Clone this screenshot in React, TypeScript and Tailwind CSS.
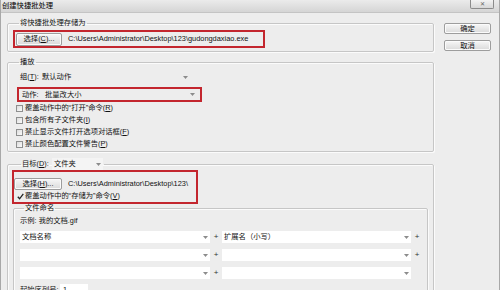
import React from 'react';

const K = ({ c }: { c: string }) => <span className="underline">{c}</span>;

const Arrow = () => (
  <svg width="5" height="3" viewBox="0 0 5 3" className="shrink-0">
    <path d="M0 0h5L2.5 3z" fill="#8c8c8c" />
  </svg>
);

const Btn = ({ children, className = '' }: { children: React.ReactNode; className?: string }) => (
  <div
    className={`flex items-center justify-center border border-[#9d9d9d] rounded-[2px] bg-gradient-to-b from-[#f7f7f7] to-[#dadada] shadow-[inset_0_0_0_1px_#fbfbfb] ${className}`}
  >
    {children}
  </div>
);

const Check = ({ checked = false }: { checked?: boolean }) =>
  checked ? (
    <svg width="7" height="7" viewBox="0 0 7 7" className="shrink-0">
      <path d="M0.8 3.8 L2.6 5.8 L6.3 0.9" stroke="#222" strokeWidth="1.3" fill="none" />
    </svg>
  ) : (
    <div className="w-[7px] h-[7px] shrink-0 border border-[#8e8f8f] bg-gradient-to-br from-[#dcdcdc] to-[#fbfbfb]" />
  );

const Dropdown = ({ text, className = '' }: { text?: string; className?: string }) => (
  <div className={`h-[12px] flex items-center justify-between pl-[2px] pr-[2px] ${className}`}>
    <span>{text}</span>
    <Arrow />
  </div>
);

const group = 'border border-[#c6c6c6] rounded-[2px] shadow-[inset_1px_1px_0_#fbfbfb,1px_1px_0_#fbfbfb]';

export default function App() {
  const options = [
    <>覆盖动作中的“打开”命令(<K c="R" />)</>,
    <>包含所有子文件夹(<K c="I" />)</>,
    <>禁止显示文件打开选项对话框(<K c="F" />)</>,
    <>禁止颜色配置文件警告(<K c="P" />)</>,
  ];

  return (
    <div
      className="w-[500px] h-[290px] overflow-hidden bg-[#ededed] border-x border-[#a8a8a8] text-[7.3px] leading-[10px] text-[#111]"
      style={{ fontFamily: '"Liberation Sans", "Noto Sans CJK SC", sans-serif' }}
    >
      {/* title bar */}
      <div className="h-[13px] flex items-start justify-between pl-[1px] bg-gradient-to-b from-[#ebebeb] to-[#d5d5d5] border-b border-[#c4c4c4]">
        <span className="leading-[12px] text-[#000]">创建快捷批处理</span>
        <div className="w-[24px] h-[9px] mr-[5px] flex items-center justify-center border border-t-0 border-[#8b8b8b] rounded-b-[2px] bg-gradient-to-b from-[#f3f3f3] to-[#d7d7d7] text-[6px] leading-[6px] text-[#666]">
          ✕
        </div>
      </div>

      <div className="flex pl-[6px] pt-[5px]">
        <div className="w-[427px] flex flex-col">
          {/* save droplet in */}
          <fieldset className={`${group} px-[5px] pt-[2px] pb-[3px]`}>
            <legend className="ml-[6px] px-[1px] leading-[10px]">将快捷批处理存储为</legend>
            <div className="w-[252px] h-[18px] border-2 border-[#c3262e] flex items-center pl-[1px]">
              <Btn className="w-[46px] h-[13px]">
                选择(<K c="C" />)...
              </Btn>
              <span className="ml-[6px] text-[7.4px]">C:\Users\Administrator\Desktop\123\gudongdaxiao.exe</span>
            </div>
          </fieldset>

          {/* play */}
          <fieldset className={`${group} mt-[5px] px-[5px] pt-[4px] pb-[1px]`}>
            <legend className="ml-[6px] px-[1px] leading-[10px]">播放</legend>
            <div className="h-[12px] flex items-center pl-[7px]">
              <span className="w-[20px]">组(<K c="T" />):</span>
              <Dropdown text="默认动作" className="w-[150px]" />
            </div>
            <div className="mt-[4px] ml-[4px] w-[185px] h-[15px] border-2 border-[#c3262e] flex items-center pl-[3px]">
              <span className="w-[21px]">动作:</span>
              <Dropdown text="批量改大小" className="w-[154px]" />
            </div>
            {options.map((o, i) => (
              <div key={i} className="h-[12px] flex items-center gap-[2px] pl-[3px]">
                <Check />
                <span>{o}</span>
              </div>
            ))}
          </fieldset>

          {/* destination */}
          <fieldset className={`${group} mt-[6px] px-[5px] pb-[8px]`}>
            <legend className="ml-[8px] px-[1px] leading-[10px] flex items-center">
              <span className="w-[30px]">目标(<K c="D" />):</span>
              <Dropdown text="文件夹" className="w-[51px] h-[10px] bg-[#f4f4f4]" />
            </legend>
            <div className="-ml-[1px] w-[186px] h-[34px] border-2 border-[#c3262e] pt-[6px] flex flex-col">
              <div className="h-[12px] flex items-center">
                <Btn className="w-[48px] h-[12px]">
                  选择(<K c="H" />)...
                </Btn>
                <span className="ml-[6px] text-[7.4px]">C:\Users\Administrator\Desktop\123\</span>
              </div>
              <div className="h-[12px] flex items-center gap-[1px] pl-[3px]">
                <Check checked />
                <span>覆盖动作中的“存储为”命令(<K c="V" />)</span>
              </div>
            </div>

            {/* file naming */}
            <fieldset className={`${group} -mt-[1px] pl-[6px] pt-[2px] pb-[6px]`}>
              <legend className="ml-[4px] px-[1px] leading-[10px]">文件命名</legend>
              <div className="h-[12px] flex items-center">示例: 我的文档.gif</div>
              <div className="mt-[4px] flex flex-col gap-[6px]">
                {[
                  ['文档名称', '扩展名（小写）', true],
                  ['', '', true],
                  ['', '', false],
                ].map(([a, b, plus], i) => (
                  <div key={i} className="h-[12px] flex items-center">
                    <Dropdown text={a as string} className="w-[190px] bg-white" />
                    <span className="w-[12px] text-center text-[8px] text-[#333]">+</span>
                    <Dropdown text={b as string} className="w-[189px] bg-white" />
                    {plus && <span className="w-[12px] text-center text-[8px] text-[#333]">+</span>}
                  </div>
                ))}
              </div>
              <div className="mt-[5px] h-[12px] flex items-center">
                <span className="w-[40px]">起始序列号:</span>
                <div className="w-[28px] h-[12px] bg-white pl-[3px] flex items-center">1</div>
              </div>
            </fieldset>
          </fieldset>
        </div>

        {/* OK / cancel */}
        <div className="ml-[10px] mt-[5px] flex flex-col gap-[6px]">
          <Btn className="w-[47px] h-[11px]">确定</Btn>
          <Btn className="w-[47px] h-[11px]">取消</Btn>
        </div>
      </div>
    </div>
  );
}
